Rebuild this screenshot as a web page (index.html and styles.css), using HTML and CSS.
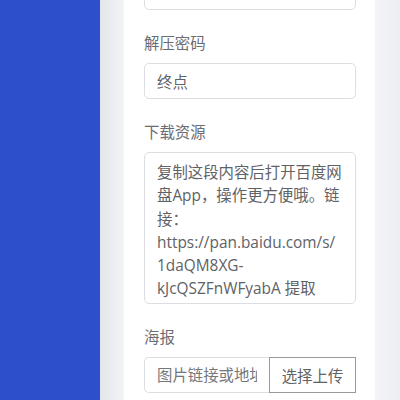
FILE: index.html
```html
<!DOCTYPE html>
<html lang="zh-CN">
<head>
  <meta charset="UTF-8" />
  <meta name="viewport" content="width=device-width, initial-scale=1.0"/>
  <title>编辑资源</title>
  <link rel="stylesheet" href="styles.css">
</head>
<body>
  <div class="layout">
    <aside class="sidebar"></aside>

    <main class="main">
      <div class="card">
        <form class="form">
          <div class="field">
            <input class="input" type="text" value="" />
          </div>

          <div class="field">
            <label class="label">解压密码</label>
            <input class="input" type="text" value="终点" />
          </div>

          <div class="field">
            <label class="label">下载资源</label>
            <textarea class="textarea">复制这段内容后打开百度网盘App，操作更方便哦。链接：https://pan.baidu.com/s/1daQM8XG-kJcQSZFnWFyabA 提取码：x8g4</textarea>
          </div>

          <div class="field">
            <label class="label">海报</label>
            <div class="input-group">
              <input class="input" type="text" placeholder="图片链接或地址" />
              <button class="upload-btn" type="button">选择上传</button>
            </div>
          </div>
        </form>
      </div>
    </main>
  </div>
</body>
</html>
```

FILE: styles.css
```css
:root {
  --blue: #2e4fcc;
  --text: #606266;
  --label: #6b6d72;
  --border: #dcdee4;
  --bg: #eff1f5;
}

* {
  box-sizing: border-box;
}

body {
  margin: 0;
  font-family: "Open Sans", "Noto Sans CJK SC", sans-serif;
  font-size: 15.4px;
  color: var(--text);
  background: var(--bg);
  overflow: hidden;
}

.layout {
  display: flex;
  height: 400px;
}

.sidebar {
  width: 100px;
  flex: none;
  background: var(--blue);
}

.main {
  flex: 1;
  display: flex;
  padding-left: 24px;
  padding-right: 25px;
  background: linear-gradient(90deg, #e3e5eb 0, #f3f4f7 24px, #f3f4f7 calc(100% - 25px), #eceef3 100%);
}

.card {
  flex: 1;
  background: #fff;
  padding: 0 19px 0 20px;
}

.form {
  margin-top: -26px;
}

.field {
  margin-bottom: 22px;
}

.label {
  display: block;
  line-height: 23px;
  margin-bottom: 8px;
  color: var(--label);
}

.input,
.textarea {
  display: block;
  width: 100%;
  font: inherit;
  color: var(--text);
  border: 1px solid var(--border);
  border-radius: 5px;
  background: #fff;
  outline: none;
}

.input {
  height: 36px;
  padding: 0 12px;
}

.input::placeholder {
  color: #75777c;
}

.textarea {
  height: 152px;
  padding: 8px 12px 0;
  line-height: 23.3px;
  resize: none;
  overflow: hidden;
}

.input-group {
  display: flex;
}

.input-group .input {
  flex: 1;
  min-width: 0;
  border-right: none;
  border-radius: 5px 0 0 5px;
}

.upload-btn {
  flex: none;
  width: 87px;
  height: 36px;
  padding: 0;
  font: inherit;
  color: var(--text);
  background: #fff;
  border: 1px solid #9a9a9e;
  cursor: pointer;
}
```
